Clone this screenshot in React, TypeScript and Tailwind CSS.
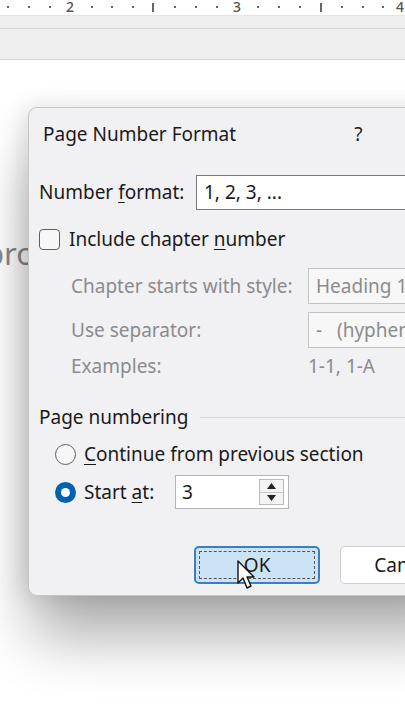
import React from 'react';

const font = { fontFamily: '"Noto Sans", "Open Sans", sans-serif' };

// ruler marks: dots every ~20.8px, numbers and half-inch ticks in between
const rulerMarks: { x: number; kind: 'dot' | 'tick' | 'num'; label?: string }[] = [
  { x: 8, kind: 'dot' }, { x: 29, kind: 'dot' }, { x: 50, kind: 'dot' },
  { x: 70, kind: 'num', label: '2' },
  { x: 92, kind: 'dot' }, { x: 112, kind: 'dot' }, { x: 133, kind: 'dot' },
  { x: 153, kind: 'tick' },
  { x: 175, kind: 'dot' }, { x: 196, kind: 'dot' }, { x: 217, kind: 'dot' },
  { x: 237, kind: 'num', label: '3' },
  { x: 258, kind: 'dot' }, { x: 279, kind: 'dot' }, { x: 300, kind: 'dot' },
  { x: 321, kind: 'tick' },
  { x: 342, kind: 'dot' }, { x: 363, kind: 'dot' }, { x: 383, kind: 'dot' },
  { x: 400, kind: 'num', label: '4' },
];

function Ruler() {
  return (
    <div className="relative h-[15px] bg-white">
      {rulerMarks.map((m, i) => {
        if (m.kind === 'dot')
          return <span key={i} className="absolute top-[6px] w-[2px] h-[2px] bg-[#666]" style={{ left: m.x - 1 }} />;
        if (m.kind === 'tick')
          return <span key={i} className="absolute top-[3px] w-[2px] h-[9px] bg-[#666]" style={{ left: m.x - 1 }} />;
        return (
          <span key={i} className="absolute top-0 text-[14px] leading-[14px] font-medium text-[#555]" style={{ left: m.x - 4 }}>
            {m.label}
          </span>
        );
      })}
    </div>
  );
}

function Field({ children, className = '' }: { children: React.ReactNode; className?: string }) {
  return (
    <div className={`flex items-center border px-[7px] whitespace-nowrap ${className}`}>
      {children}
    </div>
  );
}

export default function App() {
  return (
    <div className="relative w-[405px] h-[720px] overflow-hidden bg-white" style={font}>
      <Ruler />
      <div className="h-[45px] bg-[#efefef] border-t border-[#e4e4e4] border-b border-b-[#d3d3d3]">
        <div className="h-[13px] border-b border-[#d6d6d6]" />
      </div>

      {/* document text behind the dialog */}
      <div className="absolute left-[-15px] top-[230px] text-[31px] text-[#8a8a8a]">pro</div>

      {/* dialog */}
      <div className="absolute left-[28px] top-[107px] w-[440px] h-[489px] bg-[#f1f0f2] rounded-[9px] border border-[#c6c6c6] shadow-[0_45px_60px_-5px_rgba(0,0,0,0.33),-6px_0_24px_rgba(0,0,0,0.12)] text-[19px] text-[#1b1a1c]">
        <div className="flex items-center h-[52px] pl-[14px]">
          <span>Page Number Format</span>
          <span className="ml-[118px]">?</span>
        </div>

        <div className="pl-[10px] pt-[15px]">
          <div className="flex items-center h-[35px]">
            <span className="w-[157px]">
              Number <span className="underline underline-offset-[3px]">f</span>ormat:
            </span>
            <Field className="h-[35px] w-[260px] bg-white border-[#7a7a7a]">1, 2, 3, ...</Field>
          </div>

          <div className="flex items-center mt-[18px] h-[22px]">
            <span className="w-[21px] h-[21px] rounded-[4px] border-[1.5px] border-[#5f5f5f] bg-[#f7f7f7]" />
            <span className="ml-[9px]">
              Include chapter <span className="underline underline-offset-[3px]">n</span>umber
            </span>
          </div>

          <div className="pl-[32px] text-[#8c8b8d]">
            <div className="flex items-center mt-[18px] h-[36px]">
              <span className="w-[237px] whitespace-nowrap">Chapter starts with style:</span>
              <Field className="h-[36px] w-[120px] bg-[#f7f7f7] border-[#c4c4c4]">Heading 1</Field>
            </div>
            <div className="flex items-center mt-[8px] h-[36px]">
              <span className="w-[237px]">Use separator:</span>
              <Field className="h-[36px] w-[120px] bg-[#f7f7f7] border-[#c4c4c4]">
                -&nbsp;&nbsp;&nbsp;(hyphen)
              </Field>
            </div>
            <div className="flex items-center h-[36px]">
              <span className="w-[237px]">Examples:</span>
              <span>1-1, 1-A</span>
            </div>
          </div>

          <div className="flex items-center mt-[21px] h-[24px]">
            <span>Page numbering</span>
            <span className="flex-1 ml-[12px] h-px bg-[#dadada]" />
          </div>

          <div className="pl-[16px]">
            <div className="flex items-center mt-[13px] h-[24px]">
              <span className="w-[21px] h-[21px] rounded-full border-[1.5px] border-[#5f5f5f] bg-[#f7f7f7]" />
              <span className="ml-[8px] whitespace-nowrap">
                <span className="underline underline-offset-[3px]">C</span>ontinue from previous section
              </span>
            </div>
            <div className="flex items-center mt-[9px] h-[34px]">
              <span className="w-[21px] h-[21px] rounded-full bg-[#0063b1] flex items-center justify-center">
                <span className="w-[9px] h-[9px] rounded-full bg-white" />
              </span>
              <span className="ml-[8px] w-[91px]">
                Start <span className="underline underline-offset-[3px]">a</span>t:
              </span>
              <div className="flex h-[34px] w-[114px] bg-white border border-[#b5b5b5]">
                <span className="flex-1 flex items-center pl-[6px]">3</span>
                <div className="flex flex-col w-[25px] my-[3px] mr-[4px] border border-[#b9b9b9] bg-[#f4f4f4]">
                  <div className="flex-1 flex items-center justify-center border-b border-[#c9c9c9]">
                    <svg width="9" height="6" viewBox="0 0 9 6"><path d="M0 6 L4.5 0 L9 6 Z" fill="#222" /></svg>
                  </div>
                  <div className="flex-1 flex items-center justify-center">
                    <svg width="9" height="6" viewBox="0 0 9 6"><path d="M0 0 L4.5 6 L9 0 Z" fill="#222" /></svg>
                  </div>
                </div>
              </div>
            </div>
          </div>

          <div className="flex mt-[37px] pl-[155px] gap-[20px]">
            <button className="relative w-[128px] h-[38px] rounded-[5px] bg-[#cce3f6] border-2 border-[#3b7fc1]">
              <span className="absolute inset-[3px] border border-dashed border-[#555]" />
              OK
            </button>
            <button className="w-[128px] h-[38px] rounded-[5px] bg-white border border-[#cfcfcf] text-left pl-[33px]">
              Cancel
            </button>
          </div>
        </div>
      </div>

      {/* mouse cursor */}
      <svg className="absolute left-[237px] top-[560px]" width="20" height="30" viewBox="0 0 20 30">
        <path d="M1 1 L1 23 L6 18 L10 28 L14 26 L10 17 L17 17 Z" fill="white" stroke="#111" strokeWidth="1.4" strokeLinejoin="round" />
      </svg>
    </div>
  );
}
